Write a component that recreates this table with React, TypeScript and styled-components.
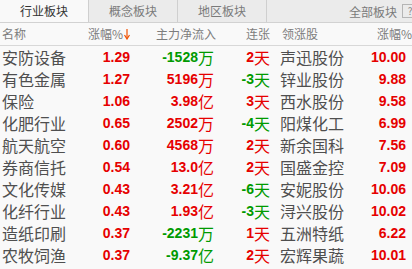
import styled, { createGlobalStyle } from "styled-components";

const GlobalStyle = createGlobalStyle`
  html, body {
    margin: 0;
    padding: 0;
    background: #f9f9f9;
    overflow: hidden;
  }
  body {
    font-family: "Noto Sans CJK SC", "Liberation Sans", sans-serif;
  }
`;

const RED = "#e60000";
const GREEN = "#009a00";
const COLS = "80px 50px 86px 54px 92px 50px";

interface IRow {
  name: string;
  pct: string;
  flow: string;
  flowUnit: string;
  days: number;
  leader: string;
  leaderPct: string;
}

const rows: IRow[] = [
  { name: "安防设备", pct: "1.29", flow: "-1528", flowUnit: "万", days: 2, leader: "声迅股份", leaderPct: "10.00" },
  { name: "有色金属", pct: "1.27", flow: "5196", flowUnit: "万", days: -3, leader: "锌业股份", leaderPct: "9.88" },
  { name: "保险", pct: "1.06", flow: "3.98", flowUnit: "亿", days: 3, leader: "西水股份", leaderPct: "9.58" },
  { name: "化肥行业", pct: "0.65", flow: "2502", flowUnit: "万", days: -4, leader: "阳煤化工", leaderPct: "6.99" },
  { name: "航天航空", pct: "0.60", flow: "4568", flowUnit: "万", days: 2, leader: "新余国科", leaderPct: "7.56" },
  { name: "券商信托", pct: "0.54", flow: "13.0", flowUnit: "亿", days: 2, leader: "国盛金控", leaderPct: "7.09" },
  { name: "文化传媒", pct: "0.43", flow: "3.21", flowUnit: "亿", days: -6, leader: "安妮股份", leaderPct: "10.06" },
  { name: "化纤行业", pct: "0.43", flow: "1.93", flowUnit: "亿", days: -3, leader: "浔兴股份", leaderPct: "10.02" },
  { name: "造纸印刷", pct: "0.37", flow: "-2231", flowUnit: "万", days: 1, leader: "五洲特纸", leaderPct: "6.22" },
  { name: "农牧饲渔", pct: "0.37", flow: "-9.37", flowUnit: "亿", days: 2, leader: "宏辉果蔬", leaderPct: "10.01" },
];

const Panel = styled.div`
  width: 412px;
  height: 269px;
  overflow: hidden;
  background: #f9f9f9;
`;

const TabBar = styled.div`
  display: flex;
  height: 22px;
  background: #ebebeb;
  border-bottom: 1px solid #d2d2d2;
`;

const Tab = styled.div<{ $active?: boolean }>`
  width: 88px;
  flex: none;
  display: flex;
  align-items: center;
  justify-content: center;
  border-right: 1px solid #cfcfcf;
  background: ${(p) => (p.$active ? "#f9f9f9" : "#ebebeb")};
  color: ${(p) => (p.$active ? "#333" : "#7a7a7a")};
  font-size: 12px;
  line-height: 22px;
`;

const TabFill = styled.div`
  flex: 1;
  display: flex;
  align-items: center;
  justify-content: flex-end;
  gap: 5px;
  color: #7a7a7a;
  font-size: 12px;
  overflow: hidden;
`;

const PickBox = styled.div`
  flex: none;
  width: 14px;
  height: 12px;
  margin-right: -6px;
  border: 1px solid #b5b5b5;
  color: #888;
  font-size: 10px;
  line-height: 12px;
  text-align: center;
`;

const Grid = styled.div`
  display: grid;
  grid-template-columns: ${COLS};
`;

const HeadRow = styled(Grid)`
  height: 22px;
  border-bottom: 1px solid #d8d8d8;
`;

const HeadCell = styled.div<{ $align?: "left" | "right"; $pad?: number }>`
  display: flex;
  align-items: center;
  justify-content: ${(p) => (p.$align === "left" ? "flex-start" : "flex-end")};
  padding: ${(p) => (p.$align === "left" ? `0 0 0 ${p.$pad ?? 2}px` : `0 ${p.$pad ?? 0}px 0 0`)};
  color: #7d7d7d;
  font-size: 12px;
  line-height: 22px;
  white-space: nowrap;
`;

const DataRow = styled(Grid)`
  height: 22px;
`;

const NameCell = styled.div<{ $pad?: number }>`
  padding-left: ${(p) => p.$pad ?? 2}px;
  color: #4f4f4f;
  font-size: 16px;
  line-height: 22px;
  white-space: nowrap;
`;

const NumCell = styled.div<{ $color: string; $pad?: number }>`
  display: flex;
  align-items: center;
  justify-content: flex-end;
  padding-right: ${(p) => p.$pad ?? 0}px;
  color: ${(p) => p.$color};
  font-family: "Liberation Sans", Arial, sans-serif;
  font-weight: bold;
  font-size: 14px;
  line-height: 22px;
  white-space: nowrap;
`;

const Unit = styled.span`
  font-family: "Noto Sans CJK SC", sans-serif;
  font-weight: normal;
  font-size: 16px;
`;

function SortArrow() {
  return (
    <svg width="6" height="12" viewBox="0 0 6 12" style={{ marginLeft: 1 }}>
      <path d="M3 1V10" stroke="#f05000" strokeWidth="1.2" />
      <path d="M0.5 7L3 11L5.5 7" fill="none" stroke="#f05000" strokeWidth="1.2" />
    </svg>
  );
}

function App() {
  return (
    <Panel>
      <GlobalStyle />
      <TabBar>
        <Tab $active>行业板块</Tab>
        <Tab>概念板块</Tab>
        <Tab>地区板块</Tab>
        <TabFill>
          <span>全部板块</span>
          <PickBox>?</PickBox>
        </TabFill>
      </TabBar>
      <HeadRow>
        <HeadCell $align="left">名称</HeadCell>
        <HeadCell>
          涨幅%
          <SortArrow />
        </HeadCell>
        <HeadCell $pad={-2}>主力净流入</HeadCell>
        <HeadCell>连张</HeadCell>
        <HeadCell $align="left" $pad={12}>领涨股</HeadCell>
        <HeadCell $pad={0}>涨幅%</HeadCell>
      </HeadRow>
      {rows.map((r) => {
        const flowColor = r.flow.startsWith("-") ? GREEN : RED;
        const dayColor = r.days < 0 ? GREEN : RED;
        return (
          <DataRow key={r.name}>
            <NameCell>{r.name}</NameCell>
            <NumCell $color={RED}>{r.pct}</NumCell>
            <NumCell $color={flowColor} $pad={2}>
              {r.flow}
              <Unit>{r.flowUnit}</Unit>
            </NumCell>
            <NumCell $color={dayColor}>
              {r.days}
              <Unit>天</Unit>
            </NumCell>
            <NameCell $pad={10}>{r.leader}</NameCell>
            <NumCell $color={RED} $pad={6}>{r.leaderPct}</NumCell>
          </DataRow>
        );
      })}
    </Panel>
  );
}

export default App;
